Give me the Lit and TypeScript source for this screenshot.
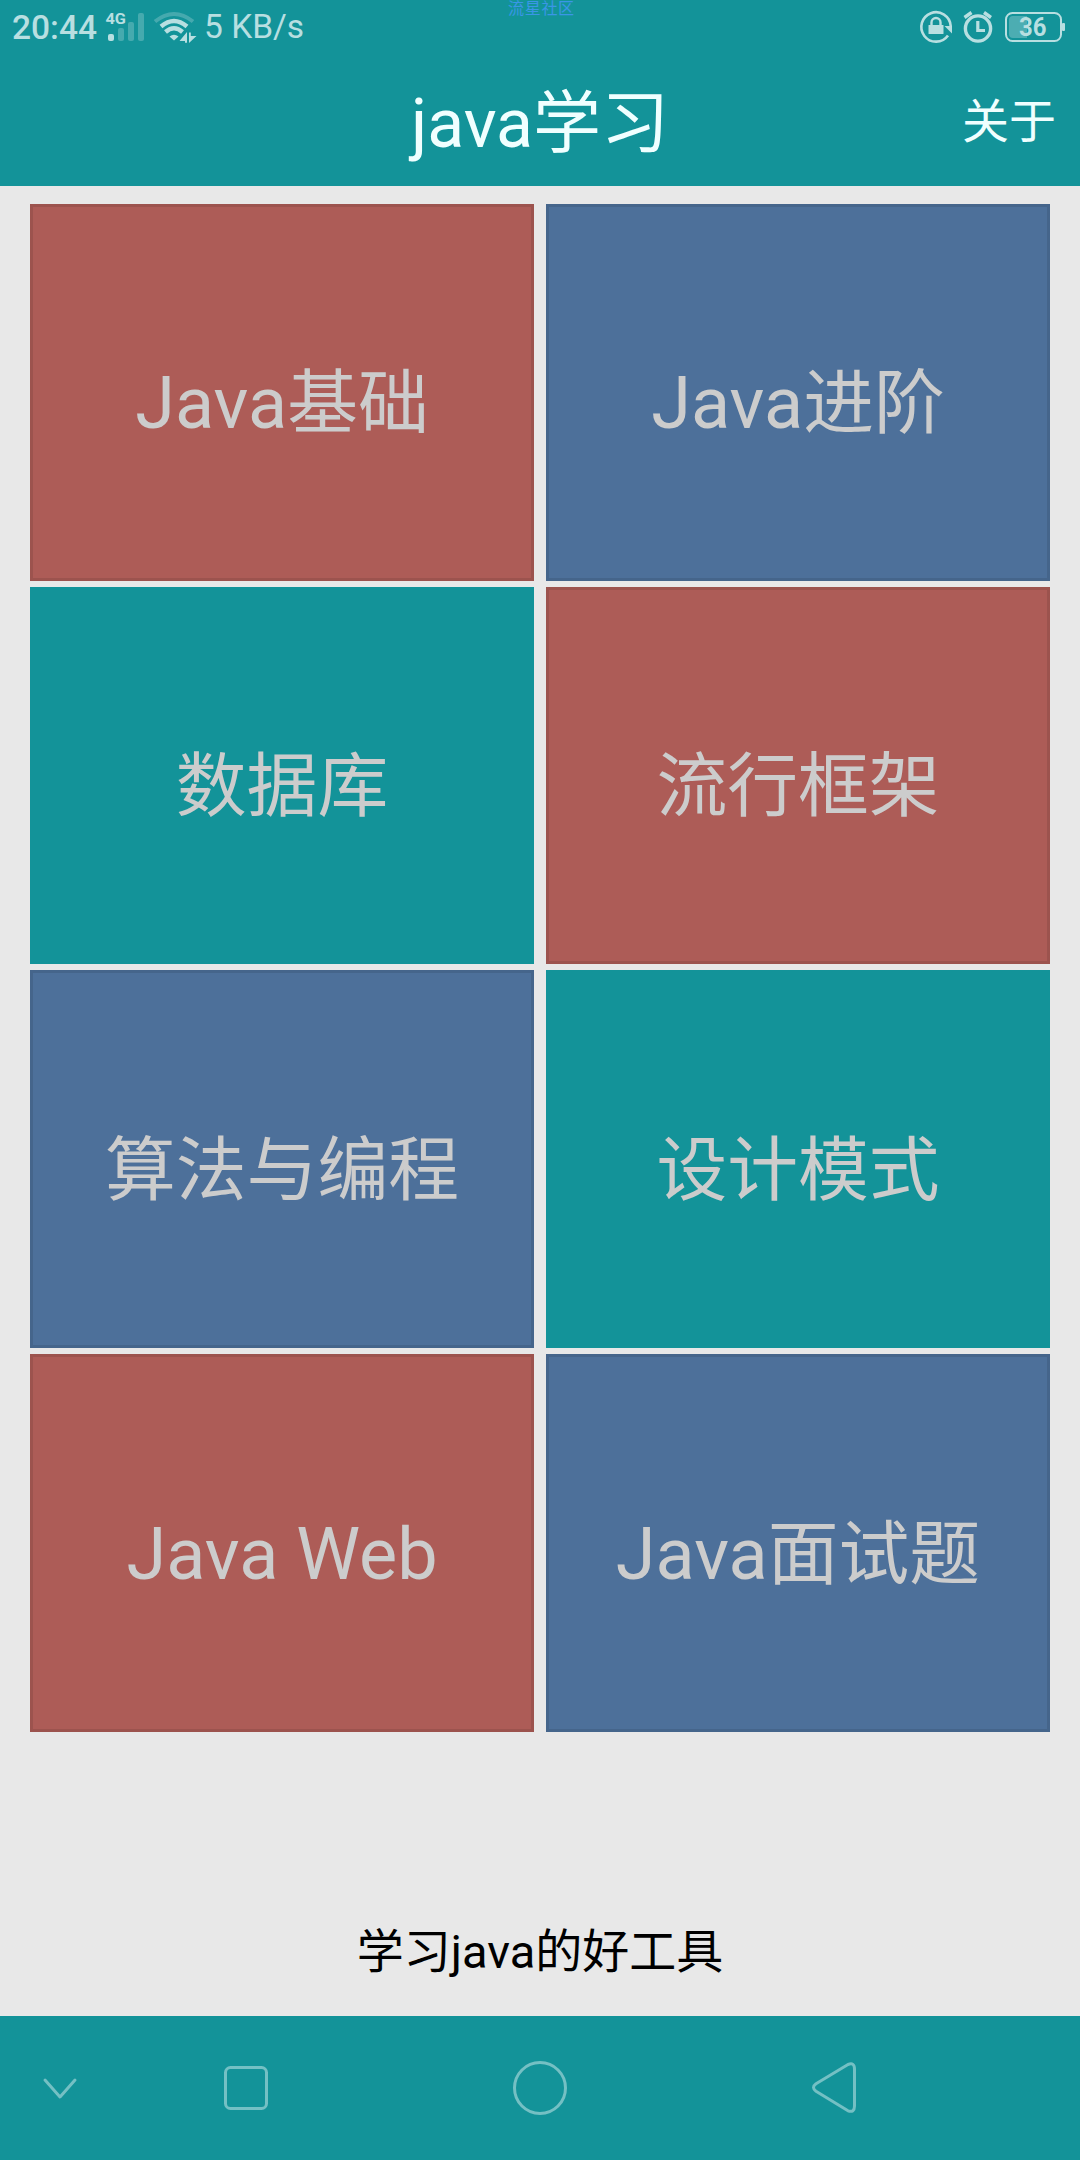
import { LitElement, html, css, svg } from "lit";
import { customElement, property } from "lit/decorators.js";

type Tone = "red" | "blue" | "teal";

const TOPICS: { latin?: string; han?: string; tone: Tone }[] = [
  { latin: "Java", han: "基础", tone: "red" },
  { latin: "Java", han: "进阶", tone: "blue" },
  { han: "数据库", tone: "teal" },
  { han: "流行框架", tone: "red" },
  { han: "算法与编程", tone: "blue" },
  { han: "设计模式", tone: "teal" },
  { latin: "Java Web", tone: "red" },
  { latin: "Java", han: "面试题", tone: "blue" },
];

@customElement("status-bar")
class StatusBar extends LitElement {
  static styles = css`
    :host {
      position: relative;
      display: flex;
      justify-content: space-between;
      height: 54px;
      color: #b8dfe1;
    }
    svg { display: block; flex: none; }
    .left, .right { display: flex; align-items: flex-start; }
    .left { padding-left: 12px; }
    .right { padding-right: 14px; }
    .time { width: 93px; font-size: 33.5px; font-weight: 500; line-height: 40px; padding-top: 8px; white-space: nowrap; }
    .rate { margin-left: -1px; font-size: 33.5px; line-height: 40px; padding-top: 7px; white-space: nowrap; }
    .net { font: 700 15.5px Roboto, sans-serif; }
    .level { font: 700 25px Roboto, sans-serif; }
    .mark {
      position: absolute;
      left: 508px;
      top: 0;
      font-size: 16px;
      letter-spacing: 0.7px;
      line-height: 17px;
      color: #3a96e6;
      white-space: nowrap;
    }
  `;
  render() {
    return html`
      <div class="left">
        <span class="time">20:44</span>
        <svg width="100" height="54" viewBox="105 0 100 54" fill="currentColor">
          <text class="net" x="105.500" y="24" textLength="20.500" lengthAdjust="spacingAndGlyphs">4G</text>
          <rect x="108" y="34" width="6" height="7" rx="2" />
          <g opacity=".3">
            <rect x="118" y="28" width="6" height="13" rx="2" />
            <rect x="128" y="22" width="6" height="19" rx="2" />
            <rect x="138" y="13" width="6" height="28" rx="2" />
          </g>
          <g fill="none" stroke="currentColor">
            <path d="M155 21.500Q174 6.500 193 21.500" stroke-width="4" opacity=".3" />
            <path d="M161 26.500Q174 15.500 187 26.500" stroke-width="4.400" />
            <path d="M165.500 32Q174 24.500 182.500 32" stroke-width="4.400" />
          </g>
          <path d="M169.500 36.500Q174 33 178.500 36.500L174 40.500Z" />
          <path d="M187 31.500V43H179.500ZM189 31.500V43L196.500 35.500H192.500V31.500Z" fill="#139399" stroke="#139399" stroke-width="2" />
          <path d="M187 32V42.700H185V41H179.500ZM189 43V32.500H190.800V36H196.500Z" />
        </svg>
        <span class="rate">5 KB/s</span>
      </div>
      <span class="mark">流星社区</span>
      <div class="right">
        <svg width="148" height="54" viewBox="918 0 148 54" fill="none" stroke="currentColor">
          <path d="M948 35.500A14.700 14.700 0 1 1 950.700 26" stroke-width="2.600" />
          <path d="M944.500 26H952V33.500Z" fill="currentColor" stroke="none" />
          <rect x="928.500" y="25" width="15" height="9" rx=".5" fill="currentColor" stroke="none" />
          <path d="M931.500 26V22.500a4.500 4.500 0 0 1 9 0V26" stroke-width="2.400" />
          <circle cx="978" cy="28.500" r="12.600" stroke-width="3.400" />
          <path d="M977.800 21V30.500H985" stroke-width="3.200" />
          <path d="M964.500 17.500L971.500 12.500M984 12.500L991 17.500" stroke-width="3.400" />
          <rect x="1006" y="13" width="55" height="28" rx="6.500" stroke-width="2" />
          <path d="M1027 16H1013a4 4 0 0 0-4 4V34a4 4 0 0 0 4 4H1027Z" fill="currentColor" stroke="none" opacity=".35" />
          <rect x="1062" y="23" width="3" height="8" rx="1" fill="currentColor" stroke="none" />
          <text class="level" x="1019" y="36" textLength="27.500" lengthAdjust="spacingAndGlyphs" fill="currentColor" stroke="none">36</text>
        </svg>
      </div>
    `;
  }
}

@customElement("title-bar")
class TitleBar extends LitElement {
  static styles = css`
    :host {
      display: grid;
      grid-template-columns: 1fr auto 1fr;
      align-items: center;
      height: 132px;
      padding: 0 24px;
      color: #f0ffff;
      white-space: nowrap;
      box-sizing: border-box;
    }
    .title { grid-column: 2; font-size: 68px; line-height: 124px; padding-top: 8px; }
    .about { justify-self: end; font-size: 47px; line-height: 128px; padding-top: 4px; }
  `;
  render() {
    return html`<span class="title">java学习</span><span class="about">关于</span>`;
  }
}

@customElement("topic-card")
class TopicCard extends LitElement {
  @property() latin = "";
  @property() han = "";
  @property({ reflect: true }) tone: Tone = "teal";
  static styles = css`
    :host {
      display: flex;
      align-items: center;
      justify-content: center;
      box-sizing: border-box;
      border: 3px solid transparent;
      color: #cccccc;
    }
    :host([tone="red"]) { background: #ad5c57; border-color: #9c534e; }
    :host([tone="blue"]) { background: #4d709a; border-color: #45658b; }
    :host([tone="teal"]) { background: #139399; border-color: #139399; }
    .label { font-size: 72px; line-height: 84px; padding-top: 23px; white-space: nowrap; }
    .han { font-size: 70.8px; }
  `;
  render() {
    return html`<span class="label">${this.latin}<span class="han">${this.han}</span></span>`;
  }
}

const NAV_ICONS = [
  { cls: "hide", w: 36, h: 24, shape: svg`<path d="M3 4L18 21L33 4" />` },
  { cls: "recent", w: 46, h: 48, shape: svg`<rect x="2.500" y="3.500" width="41" height="41" rx="5" />` },
  { cls: "home", w: 56, h: 56, shape: svg`<circle cx="28" cy="28" r="25.500" />` },
  { cls: "back", w: 50, h: 56, shape: svg`<path d="M37 4.500L5 23.800Q0 27.500 5 31.200L37 50.800Q43.500 53 43.500 46V9Q43.500 2 37 4.500Z" />` },
];

@customElement("nav-bar")
class NavBar extends LitElement {
  static styles = css`
    :host {
      display: flex;
      align-items: center;
      height: 144px;
      background: #139399;
    }
    svg { display: block; fill: none; stroke: #74c0c4; stroke-width: 3; stroke-linecap: round; stroke-linejoin: round; }
    .hide { margin-left: 42px; }
    .recent { margin-left: 145px; }
    .home { margin-left: 243px; }
    .back { margin-left: 243px; }
  `;
  render() {
    return NAV_ICONS.map(
      (i) => html`<svg class=${i.cls} width=${i.w} height=${i.h} viewBox="0 0 ${i.w} ${i.h}">${i.shape}</svg>`
    );
  }
}

@customElement("app-root")
class AppRoot extends LitElement {
  static styles = css`
    :host {
      display: flex;
      flex-direction: column;
      width: 1080px;
      height: 2160px;
      background: #e8e8e8;
      font-family: Roboto, "Noto Sans CJK SC", sans-serif;
    }
    .top { background: #139399; }
    .grid {
      display: grid;
      grid-template-columns: 1fr 1fr;
      grid-template-rows: 377px 377px 378px 378px;
      gap: 6px 12px;
      padding: 18px 30px 0;
    }
    .foot {
      flex: 1;
      display: flex;
      align-items: flex-end;
      justify-content: center;
      padding-bottom: 34px;
      color: #000;
      font-size: 47px;
      line-height: 60px;
    }
  `;
  render() {
    return html`
      <header class="top">
        <status-bar></status-bar>
        <title-bar></title-bar>
      </header>
      <main class="grid">
        ${TOPICS.map(
          (t) => html`<topic-card .latin=${t.latin ?? ""} .han=${t.han ?? ""} .tone=${t.tone}></topic-card>`
        )}
      </main>
      <div class="foot">学习java的好工具</div>
      <nav-bar></nav-bar>
    `;
  }
}
